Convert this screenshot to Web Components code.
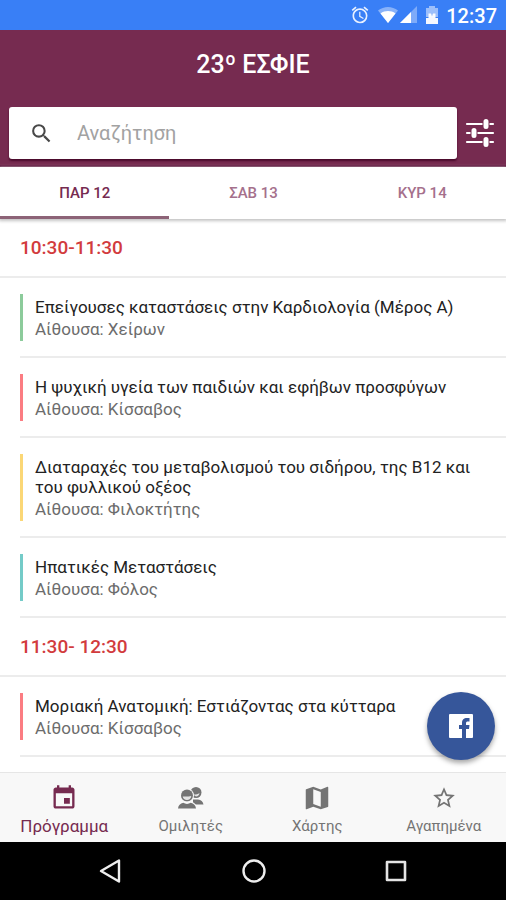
<!DOCTYPE html>
<html lang="el">
<head>
<meta charset="utf-8">
<meta name="viewport" content="width=device-width, initial-scale=1">
<title>23º ΕΣΦΙΕ</title>
<style>
  html, body { margin: 0; height: 100%; }
  body { font-family: Roboto, "Noto Sans", sans-serif; background: #fff; color: #222; }
</style>
</head>
<body>
<conference-app>
  <status-bar slot="top" time="12:37"></status-bar>
  <app-header slot="top">23º ΕΣΦΙΕ</app-header>
  <day-tabs slot="top">
    <day-tab selected>ΠΑΡ 12</day-tab>
    <day-tab>ΣΑΒ 13</day-tab>
    <day-tab>ΚΥΡ 14</day-tab>
  </day-tabs>

  <time-group label="10:30-11:30">
    <session-item room="Χείρων" style="--room-color:#8ccb9b">Επείγουσες καταστάσεις στην Καρδιολογία (Μέρος Α)</session-item>
    <session-item room="Κίσσαβος" style="--room-color:#fb7c82">Η ψυχική υγεία των παιδιών και εφήβων προσφύγων</session-item>
    <session-item room="Φιλοκτήτης" style="--room-color:#fbd776">Διαταραχές του μεταβολισμού του σιδήρου, της Β12 και του φυλλικού οξέος</session-item>
    <session-item room="Φόλος" style="--room-color:#74cbc8">Ηπατικές Μεταστάσεις</session-item>
  </time-group>
  <time-group label="11:30- 12:30">
    <session-item room="Κίσσαβος" style="--room-color:#fb7c82">Μοριακή Ανατομική: Εστιάζοντας στα κύτταρα</session-item>
  </time-group>

  <share-fab slot="fab"></share-fab>

  <nav-bar slot="bottom">
    <nav-item selected>
      <svg slot="icon" width="28" height="28" viewBox="0 0 24 24" fill="currentColor"><path d="M17 12h-5v5h5v-5zM16 1v2H8V1H6v2H5c-1.100 0-2 .9-2 2v14c0 1.100.9 2 2 2h14c1.100 0 2-.9 2-2V5c0-1.100-.9-2-2-2h-1V1h-2zm3 18H5V8h14v11z"/></svg>
      Πρόγραμμα
    </nav-item>
    <nav-item>
      <svg slot="icon" width="26" height="26" viewBox="0 0 26 26" fill="currentColor">
        <circle cx="18" cy="7.500" r="5.500"/>
        <path d="M15 9.500c2.500.3 4.500-.2 6.500-1.500-.3 2.200-1.500 3.500-3.500 3.500z" fill="#e4e4e4"/>
        <path d="M15 14.500h5c3 .5 5 1.800 5.500 5H15z"/>
        <circle cx="9" cy="10.500" r="7" fill="#f8f8f8"/>
        <circle cx="9" cy="10.500" r="6"/>
        <path d="M4.700 11.500c3 .2 6 .2 8.600-.5-.3 2.500-2 4-4.300 4s-4-1.300-4.300-3.500z" fill="#e4e4e4"/>
        <path d="M-1 24c.3-4.500 2.500-6.500 6-7.200h8c3.500.7 5.700 2.700 6 7.200z" fill="#f8f8f8"/>
        <path d="M0 23.500c.4-3.300 2.200-5 5.300-5.700 2 1.500 5.400 1.500 7.400 0 3.100.7 4.900 2.400 5.300 5.700z"/>
      </svg>
      Ομιλητές
    </nav-item>
    <nav-item>
      <svg slot="icon" width="30" height="30" viewBox="0 0 24 24" fill="currentColor"><path d="M20.500 3l-.16.030L15 5.100 9 3 3.360 4.900c-.21.070-.36.250-.36.480V20.500c0 .28.220.5.500.5l.16-.030L9 18.900l6 2.100 5.640-1.900c.21-.070.360-.25.360-.48V3.500c0-.28-.22-.5-.5-.5zM15 19l-6-2.110V5l6 2.110V19z"/></svg>
      Χάρτης
    </nav-item>
    <nav-item>
      <svg slot="icon" width="26" height="26" viewBox="0 0 24 24" fill="currentColor"><path d="M22 9.240l-7.190-.62L12 2 9.190 8.630 2 9.240l5.460 4.730L5.820 21 12 17.270 18.180 21l-1.630-7.030L22 9.240zM12 15.400l-3.760 2.270 1-4.280-3.320-2.880 4.380-.38L12 6.100l1.710 4.040 4.380.38-3.320 2.880 1 4.280L12 15.400z"/></svg>
      Αγαπημένα
    </nav-item>
  </nav-bar>
  <system-bar slot="bottom"></system-bar>
</conference-app>

<script>
  const define = (name, html, setup) => {
    const template = document.createElement('template');
    template.innerHTML = html;
    customElements.define(name, class extends HTMLElement {
      connectedCallback() {
        if (this.shadowRoot) return;
        const root = this.attachShadow({ mode: 'open' });
        root.append(template.content.cloneNode(true));
        if (setup) setup(this, root);
      }
    });
  };

  define('conference-app', `
    <style>
      :host { display: flex; flex-direction: column; height: 100vh; }
      header, footer { flex: none; position: relative; z-index: 1; }
      main { flex: 1; min-height: 0; overflow: hidden; }
      .fab { position: absolute; right: 11px; bottom: 100%; margin-bottom: 12px; }
    </style>
    <header><slot name="top"></slot></header>
    <main><slot></slot></main>
    <footer><div class="fab"><slot name="fab"></slot></div><slot name="bottom"></slot></footer>
  `);

  define('status-bar', `
    <style>
      :host { display: flex; align-items: center; justify-content: flex-end; height: 30px;
        padding-right: 9px; background: #397ff6; color: #fff; font-size: 20px; line-height: 30px; font-weight: 500; }
      svg { display: block; }
      .alarm { margin-right: 7px; }
      .signal { margin-right: 7px; }
      .battery { margin-right: 7px; }
      span { padding-top: 2px; }
    </style>
    <svg class="alarm" width="20" height="20" viewBox="0 0 24 24" fill="#e9f1ff"><path d="M22 5.720l-4.600-3.860-1.290 1.530 4.600 3.860L22 5.720zM7.880 3.390L6.600 1.860 2 5.710l1.290 1.530 4.590-3.850zM12.500 8H11v6l4.750 2.850.75-1.230-4-2.370V8zM12 4c-4.970 0-9 4.030-9 9s4.020 9 9 9a9 9 0 0 0 0-18zm0 16c-3.870 0-7-3.130-7-7s3.130-7 7-7 7 3.130 7 7-3.130 7-7 7z"/></svg>
    <svg width="22" height="18" viewBox="0 0 22 18"><path d="M1 4.500C7-.2 15-.2 21 4.500L11 17z" fill="#fff" opacity=".4"/><path d="M3.500 7.500C8 4.300 14 4.300 18.500 7.500L11 17z" fill="#fff"/></svg>
    <svg class="signal" width="19" height="18" viewBox="0 0 19 18"><path d="M18 0v17H1z" fill="#fff" opacity=".35"/><path d="M12 6v11H1z" fill="#fff"/></svg>
    <svg class="battery" width="14" height="18" viewBox="0 0 14 18"><path d="M4 0h6v2h3v9H1V2h3z" fill="#fff" opacity=".5"/><path d="M1 12h2.500V7.500h2.500l1 3 1-3h2.500V12H13v6H1z" fill="#fff" opacity=".95"/></svg>
    <span></span>
  `, (el, root) => { root.querySelector('span').textContent = el.getAttribute('time'); });

  define('app-header', `
    <style>
      :host { display: block; background: #762b50; border-bottom: 2px solid #5f0f3a; box-sizing: border-box; height: 137px; padding: 0 9px; }
      h1 { margin: 0; padding-top: 17px; height: 62px; box-sizing: border-box; font-size: 25px; line-height: 36px; font-weight: 500; color: #fff; text-align: center; }
      .row { display: flex; align-items: center; gap: 8px; padding-top: 15px; }
      label { flex: 1; display: flex; align-items: center; gap: 23px; height: 52px; padding-left: 20px; background: #fff; border-radius: 3px;
        box-shadow: 0 2px 2px #4a0a2c; }
      input { flex: 1; min-width: 0; border: 0; outline: 0; padding: 0; background: none; font: 20px/28px Roboto, "Noto Sans", sans-serif; color: #333; }
      input::placeholder { color: #a2a2a2; opacity: 1; }
      button { border: 0; background: none; padding: 0; color: #fff; }
      svg { display: block; }
    </style>
    <h1><slot></slot></h1>
    <div class="row">
      <label>
        <svg width="25" height="25" viewBox="0 0 24 24" fill="#484848"><path d="M15.500 14h-.79l-.28-.27A6.470 6.470 0 0 0 16 9.500 6.500 6.500 0 1 0 9.500 16c1.610 0 3.090-.59 4.230-1.570l.27.280v.79l5 4.990L20.490 19l-4.990-5zm-6 0C7.010 14 5 11.990 5 9.500S7.010 5 9.500 5 14 7.010 14 9.500 11.990 14 9.500 14z"/></svg>
        <input type="search" placeholder="Αναζήτηση" aria-label="Αναζήτηση">
      </label>
      <button aria-label="Φίλτρα">
        <svg width="32" height="30" viewBox="0 0 32 30" fill="none" stroke="#fff" stroke-linecap="round">
          <path d="M2 6h26M2 15h26M2 24h26" stroke-width="2.200"/>
          <path d="M21 3v6M9 12v6M21 21v6" stroke="#762b50" stroke-width="7" stroke-linecap="butt"/>
          <path d="M21 3.500v5M9 12.500v5M21 21.500v5" stroke-width="5"/>
        </svg>
      </button>
    </div>
  `);

  define('day-tabs', `
    <style>
      :host { display: flex; height: 52px; background: #fff; box-shadow: 0 1px 3px 1px #c4c4c4; }
    </style>
    <slot></slot>
  `);

  define('day-tab', `
    <style>
      :host { flex: 1; display: flex; }
      button { flex: 1; border: 0; border-bottom: 3px solid transparent; padding: 2px 0 0 1px; background: none;
        font: 500 15px/20px Roboto, "Noto Sans", sans-serif; color: #a5708c; }
      :host([selected]) button { color: #762b50; border-bottom-color: #8d6377; }
    </style>
    <button><slot></slot></button>
  `);

  define('time-group', `
    <style>
      :host { display: block; }
      h2 { margin: 0; padding: 18px 20px 17px; border-bottom: 2px solid #ececec; font-size: 19px; line-height: 22px; font-weight: 500; color: #d23b3d; }
    </style>
    <h2></h2>
    <slot></slot>
  `, (el, root) => { root.querySelector('h2').textContent = el.getAttribute('label'); });

  define('session-item', `
    <style>
      :host { display: block; margin-left: 20px; padding: 16px 20px 15px 0; border-bottom: 2px solid #ececec; }
      article { border-left: 3px solid var(--room-color); padding: 3px 0 2px 12px; }
      h3, p { margin: 0; font-size: 17px; line-height: 20px; font-weight: 400; }
      h3 { color: #222; }
      p { margin-top: 2px; color: #6c6c6c; }
    </style>
    <article><h3><slot></slot></h3><p></p></article>
  `, (el, root) => { root.querySelector('p').textContent = 'Αίθουσα: ' + el.getAttribute('room'); });

  define('share-fab', `
    <style>
      :host { display: block; }
      button { display: grid; place-items: center; width: 68px; height: 68px; border: 0; border-radius: 50%; padding: 0;
        background: #36569a; box-shadow: 0 3px 5px rgba(0,0,0,.35); }
    </style>
    <button aria-label="Facebook">
      <svg width="24" height="24" viewBox="0 0 24 24"><rect width="24" height="24" rx="1" fill="#fff"/><path d="M13 24v-9h-3v-4h3V9c0-3.500 1.800-5 5-5h2.500v3.500H19c-1.500 0-2 .5-2 1.800V11h3.500l-.5 4h-3v9z" fill="#36569a"/></svg>
    </button>
  `);

  define('nav-bar', `
    <style>
      :host { display: flex; height: 70px; box-sizing: border-box; background: #f8f8f8; border-top: 1px solid #e6e6e6; }
    </style>
    <slot></slot>
  `);

  define('nav-item', `
    <style>
      :host { flex: 1; display: flex; min-width: 0; color: #747474; }
      :host([selected]) { color: #762b50; }
      a { flex: 1; display: flex; flex-direction: column; align-items: center; padding-left: 2px; color: inherit; text-decoration: none; font-size: 15px; line-height: 20px; }
      :host([selected]) a { font-size: 17px; }
      .icon { display: flex; align-items: center; justify-content: center; height: 30px; margin: 10px 0 3px; }
    </style>
    <a href="#"><span class="icon"><slot name="icon"></slot></span><span><slot></slot></span></a>
  `);

  define('system-bar', `
    <style>
      :host { display: flex; justify-content: center; align-items: center; gap: 116px; height: 58px; padding-left: 2px; background: #000; }
      button { border: 0; padding: 0; background: none; }
      svg { display: block; }
    </style>
    <button aria-label="Πίσω"><svg width="26" height="26" viewBox="0 0 26 26" fill="none" stroke="#eee" stroke-width="2.400" stroke-linejoin="round"><path d="M20 2.500v21L2 13z"/></svg></button>
    <button aria-label="Αρχική"><svg width="26" height="26" viewBox="0 0 26 26" fill="none" stroke="#eee" stroke-width="2.400"><circle cx="13" cy="13" r="10.500"/></svg></button>
    <button aria-label="Πρόσφατα"><svg width="26" height="26" viewBox="0 0 26 26" fill="none" stroke="#e4e4e4" stroke-width="2.600" stroke-linejoin="round"><path d="M4 4h18v18H4z"/></svg></button>
  `);
</script>
</body>
</html>
